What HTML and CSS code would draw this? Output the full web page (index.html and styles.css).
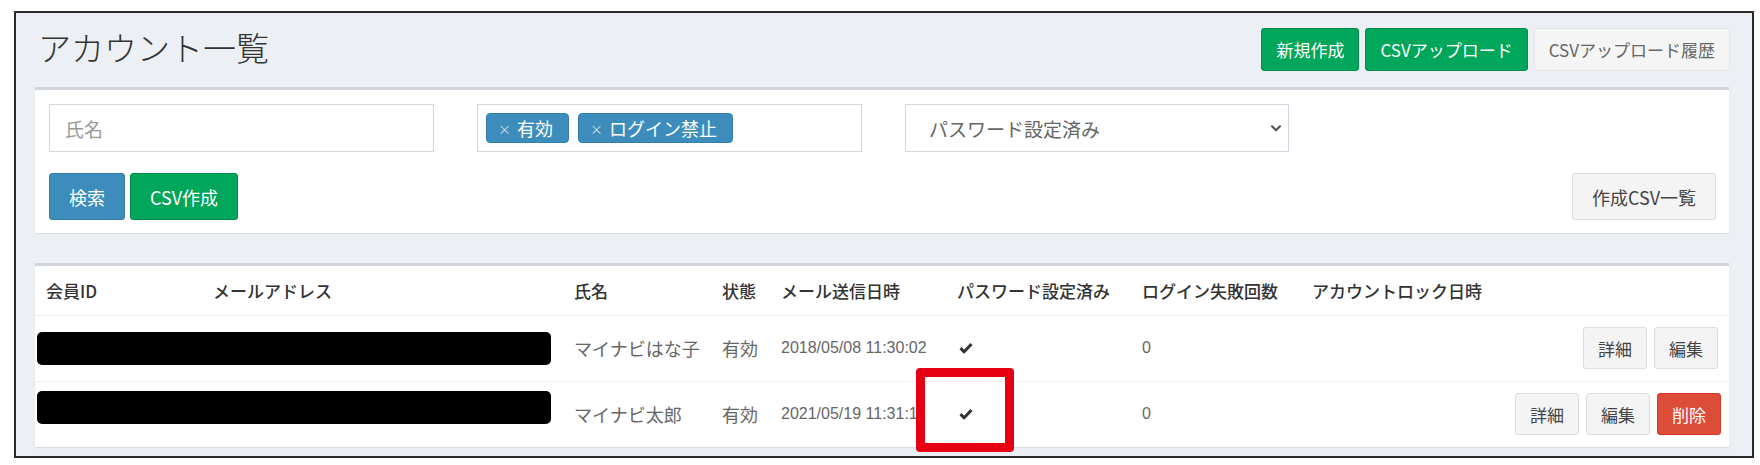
FILE: index.html
```html
<!DOCTYPE html>
<html lang="ja">
<head>
<meta charset="utf-8">
<title>アカウント一覧</title>
<link rel="stylesheet" href="styles.css">
</head>
<body>
<div class="frame">
  <div class="page-head">
    <h1 class="title">アカウント一覧</h1>
    <div class="head-actions">
      <button class="btn btn-sm btn-green">新規作成</button>
      <button class="btn btn-sm btn-green">CSVアップロード</button>
      <button class="btn btn-sm btn-light">CSVアップロード履歴</button>
    </div>
  </div>

  <section class="box filter-box">
    <div class="filter-row">
      <div class="field input-field"><span class="placeholder">氏名</span></div>
      <div class="field tag-field">
        <span class="tag"><span class="tag-x">×</span>有効</span>
        <span class="tag"><span class="tag-x">×</span>ログイン禁止</span>
      </div>
      <div class="field select-field">
        <span class="select-text">パスワード設定済み</span>
        <svg class="chevron" viewBox="0 0 10 7" width="10" height="7"><path d="M1 1.3 L5 5.3 L9 1.3" fill="none" stroke="#555" stroke-width="2.2" stroke-linecap="round" stroke-linejoin="round"/></svg>
      </div>
    </div>
    <div class="filter-actions">
      <div class="btn-row">
        <button class="btn btn-md btn-blue">検索</button>
        <button class="btn btn-md btn-green">CSV作成</button>
      </div>
      <button class="btn btn-md btn-default">作成CSV一覧</button>
    </div>
  </section>

  <section class="box table-box">
    <table class="accounts">
      <colgroup>
        <col class="c-id"><col class="c-mail"><col class="c-name"><col class="c-state"><col class="c-sent"><col class="c-pass"><col class="c-fail"><col class="c-lock"><col class="c-act">
      </colgroup>
      <thead>
        <tr>
          <th>会員ID</th>
          <th>メールアドレス</th>
          <th>氏名</th>
          <th>状態</th>
          <th>メール送信日時</th>
          <th>パスワード設定済み</th>
          <th>ログイン失敗回数</th>
          <th>アカウントロック日時</th>
          <th></th>
        </tr>
      </thead>
      <tbody>
        <tr>
          <td colspan="2" class="redacted-cell"><div class="redact"></div></td>
          <td>マイナビはな子</td>
          <td>有効</td>
          <td class="num">2018/05/08 11:30:02</td>
          <td><svg class="check" viewBox="0 0 14 12" width="14" height="12"><path d="M1.5 6.2 L5.2 9.8 L12.5 2" fill="none" stroke="#333" stroke-width="3" stroke-linejoin="round"/></svg></td>
          <td class="num">0</td>
          <td></td>
          <td class="actions">
            <button class="btn btn-xs btn-default">詳細</button>
            <button class="btn btn-xs btn-default">編集</button>
          </td>
        </tr>
        <tr>
          <td colspan="2" class="redacted-cell"><div class="redact up"></div></td>
          <td>マイナビ太郎</td>
          <td>有効</td>
          <td class="num">2021/05/19 11:31:11</td>
          <td><svg class="check" viewBox="0 0 14 12" width="14" height="12"><path d="M1.5 6.2 L5.2 9.8 L12.5 2" fill="none" stroke="#333" stroke-width="3" stroke-linejoin="round"/></svg></td>
          <td class="num">0</td>
          <td></td>
          <td class="actions">
            <button class="btn btn-xs btn-default">詳細</button>
            <button class="btn btn-xs btn-default">編集</button>
            <button class="btn btn-xs btn-red">削除</button>
          </td>
        </tr>
      </tbody>
    </table>
  </section>

  <div class="highlight"></div>
</div>
</body>
</html>
```

FILE: styles.css
```css
* { box-sizing: border-box; }

html, body {
  margin: 0;
  padding: 0;
  background: #ffffff;
}

body {
  font-family: "Noto Sans CJK JP", "Noto Sans", sans-serif;
  color: #333;
}

.frame {
  position: relative;
  margin: 11px 0 0 14px;
  width: 1740px;
  border: 2px solid #2b2b2b;
  background: #ecf0f5;
  padding: 15px 22px 9px 19px;
}

/* ---------- header ---------- */
.page-head {
  display: flex;
  justify-content: space-between;
  align-items: center;
  height: 43px;
  margin-bottom: 16px;
}

.title {
  margin: 0 0 5px 3px;
  font-size: 33px;
  font-weight: 300;
  line-height: 40px;
  color: #333;
  letter-spacing: 0;
}

.head-actions {
  display: flex;
  gap: 6px;
}

/* ---------- buttons ---------- */
.btn {
  font-family: "Noto Sans CJK JP", "Noto Sans", sans-serif;
  display: inline-flex;
  align-items: center;
  justify-content: center;
  border: 1px solid transparent;
  border-radius: 3px;
  cursor: pointer;
  white-space: nowrap;
  line-height: 1;
  box-shadow: none;
}

.btn-sm {
  height: 43px;
  padding: 0 14px;
  font-size: 17px;
}

.btn-md {
  height: 47px;
  padding: 0 19px;
  font-size: 18px;
}

.btn-xs {
  height: 42px;
  padding: 0 14px;
  font-size: 17px;
}

.btn-green {
  background: #00a65a;
  border-color: #008d4c;
  color: #ffffff;
}

.btn-blue {
  background: #3c8dbc;
  border-color: #367fa9;
  color: #ffffff;
}

.btn-red {
  background: #dd4b39;
  border-color: #d73925;
  color: #ffffff;
}

.btn-default {
  background: #f4f4f4;
  border-color: #dddddd;
  color: #444;
}

.btn-light {
  background: #f5f5f5;
  border-color: #e6e6e6;
  color: #666;
}

/* ---------- boxes ---------- */
.box {
  background: #ffffff;
  border-top: 3px solid #d2d6de;
  box-shadow: 0 1px 1px rgba(0, 0, 0, 0.08);
  width: 1694px;
}

.filter-box {
  padding: 14px 13px 13px 14px;
  margin-bottom: 30px;
}

.filter-row {
  display: flex;
  gap: 43px;
  height: 48px;
  margin-bottom: 21px;
}

.field {
  width: 385px;
  height: 48px;
  border: 1px solid #d2d6de;
  background: #ffffff;
  display: flex;
  align-items: center;
}

.input-field {
  padding-left: 15px;
}

.placeholder {
  font-size: 19px;
  color: #999;
}

.tag-field {
  padding-left: 8px;
  gap: 9px;
}

.tag {
  display: inline-flex;
  align-items: center;
  height: 30px;
  padding: 0 15px 0 11px;
  background: #3c8dbc;
  border: 1px solid #367fa9;
  border-radius: 4px;
  color: #ffffff;
  font-size: 18px;
  line-height: 1;
}

.tag-x {
  font-size: 13px;
  color: rgba(255, 255, 255, 0.75);
  margin-right: 6px;
}

.select-field {
  width: 384px;
  padding: 0 7px 0 23px;
  justify-content: space-between;
}

.select-text {
  font-size: 19px;
  color: #666;
}

.chevron {
  display: block;
}

.filter-actions {
  display: flex;
  justify-content: space-between;
  align-items: center;
  height: 47px;
}

.btn-row {
  display: flex;
  gap: 5px;
}

/* ---------- table ---------- */
.table-box {
  padding: 0;
}

.accounts {
  width: 100%;
  border-collapse: collapse;
  table-layout: fixed;
  font-size: 18px;
}

.c-id { width: 167px; }
.c-mail { width: 361px; }
.c-name { width: 148px; }
.c-state { width: 59px; }
.c-sent { width: 176px; }
.c-pass { width: 185px; }
.c-fail { width: 170px; }
.c-lock { width: 200px; }
.c-act { width: 228px; }

.accounts th {
  height: 49px;
  padding: 0 11px;
  text-align: left;
  font-weight: 500;
  color: #333;
  font-size: 17px;
  white-space: nowrap;
  border-bottom: 1px solid #f0f0f0;
}

.accounts td {
  height: 66px;
  padding: 0 11px;
  color: #666;
  white-space: nowrap;
  vertical-align: middle;
  border-top: 1px solid #f2f2f2;
}

.accounts td.num {
  font-family: "Liberation Sans", Arial, sans-serif;
  font-size: 16px;
  color: #666;
}

.accounts td.redacted-cell {
  padding-left: 2px;
}

.redact {
  width: 514px;
  height: 33px;
  background: #000000;
  border-radius: 5px;
}

.redact.up {
  margin-bottom: 14px;
}

.check {
  display: block;
  margin-left: 2px;
}

.accounts td.actions {
  text-align: right;
  padding-right: 11px;
}

.actions .btn {
  margin-left: 3px;
}

/* ---------- annotation overlay ---------- */
.highlight {
  position: absolute;
  left: 900px;
  top: 355px;
  width: 98px;
  height: 84px;
  border: 9px solid #e60012;
  border-radius: 4px;
  pointer-events: none;
}
```
